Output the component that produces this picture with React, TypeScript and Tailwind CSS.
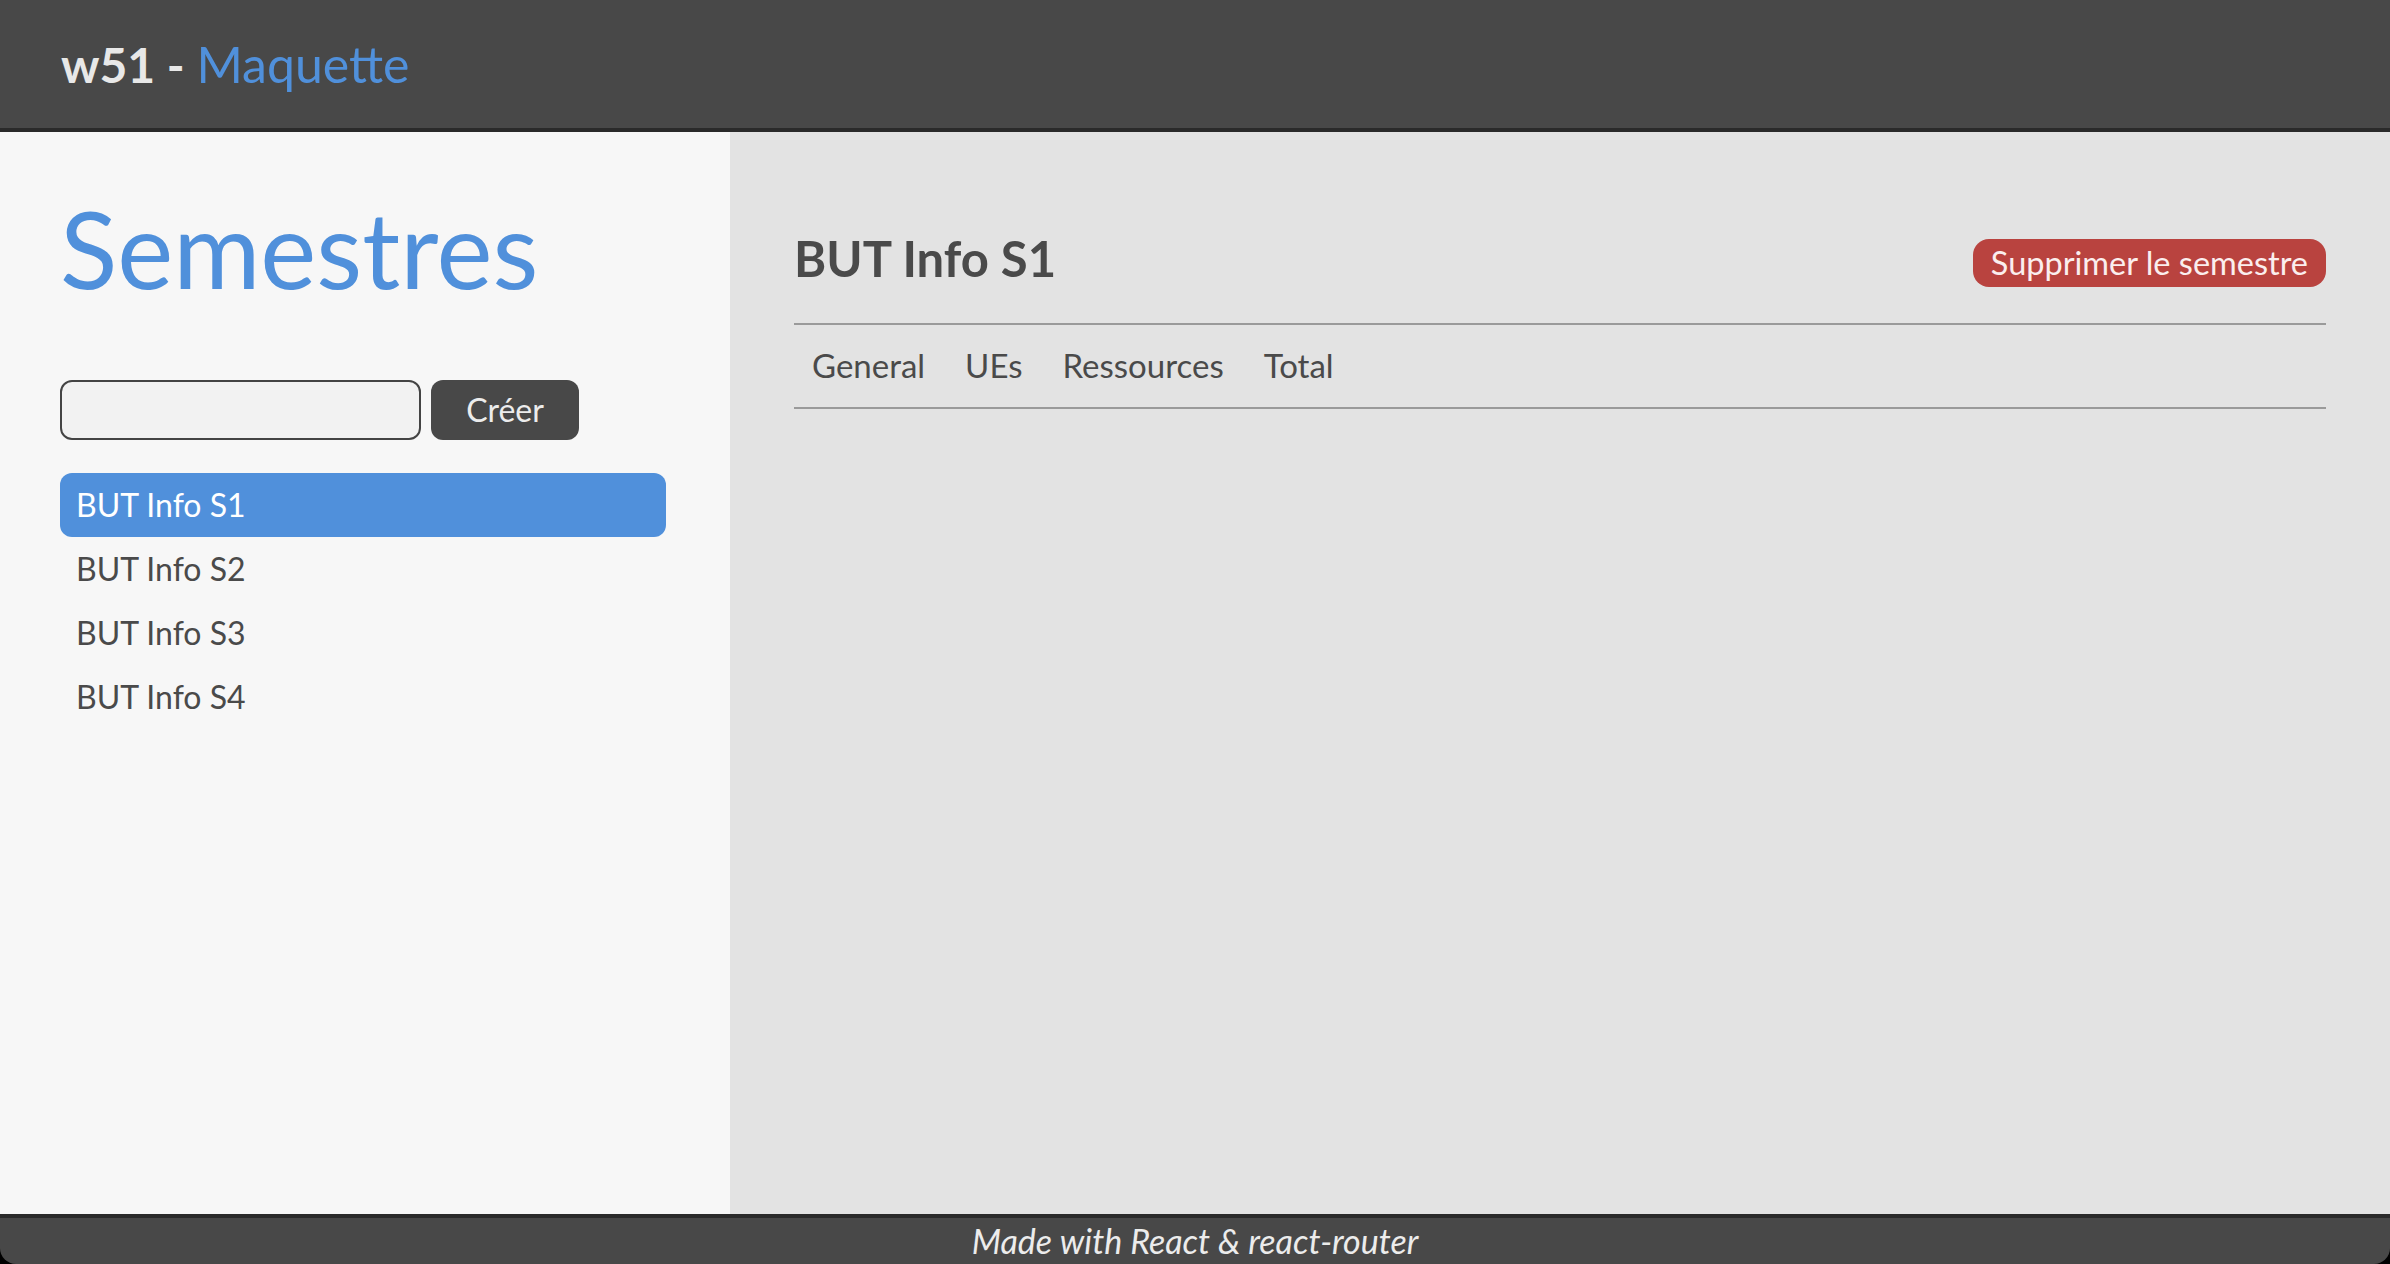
import React from "react";

const semestres = ["BUT Info S1", "BUT Info S2", "BUT Info S3", "BUT Info S4"];
const tabs = ["General", "UEs", "Ressources", "Total"];

export default function App() {
  return (
    <div className="h-screen w-full flex flex-col bg-black font-['Lato','Noto_Sans',sans-serif] text-[#4a4a4a]">
      <header className="h-[132px] shrink-0 bg-[#484848] border-b-4 border-[#2a2a2a] flex items-center px-[61px]">
        <h1 className="text-[48px] leading-none font-bold text-[#e8e8e8]">
          w51 - <span className="text-[50px] text-[#5090db] font-normal">Maquette</span>
        </h1>
      </header>
      <div className="flex flex-1 min-h-0">
        <aside className="w-[730px] shrink-0 bg-[#f7f7f7] px-[60px] pt-[63px]">
          <h2 className="text-[106px] leading-none text-[#5090db] font-normal">Semestres</h2>
          <div className="flex gap-[10px] mt-[79px]">
            <input
              type="text"
              className="w-[361px] h-[60px] rounded-[12px] border-2 border-[#444] bg-[#f2f2f2] px-3 text-[30px] outline-none"
            />
            <button className="w-[148px] h-[60px] rounded-[12px] bg-[#484848] text-[#ececec] text-[32px]">
              Créer
            </button>
          </div>
          <ul className="mt-[33px] flex flex-col">
            {semestres.map((s, i) => (
              <li
                key={s}
                className={
                  i === 0
                    ? "h-[64px] w-[606px] rounded-[12px] bg-[#5090db] text-white text-[32px] flex items-center px-[16px]"
                    : "h-[64px] w-[606px] rounded-[12px] text-[#4a4a4a] text-[32px] flex items-center px-[16px]"
                }
              >
                {s}
              </li>
            ))}
          </ul>
        </aside>
        <main className="flex-1 bg-[#e3e3e3] px-[64px] pt-[96px]">
          <div className="flex items-center justify-between h-[60px]">
            <h3 className="text-[49px] font-bold text-[#4a4a4a] leading-none">BUT Info S1</h3>
            <button className="mt-[10px] h-[48px] px-[18px] rounded-[16px] bg-[#b9433f] text-[#fbeeee] text-[32.5px] leading-none">
              Supprimer le semestre
            </button>
          </div>
          <nav className="mt-[35px] border-t-2 border-b-2 border-[#9a9a9a] h-[86px] flex items-center pl-[18px] gap-[40px] text-[33px] text-[#4a4a4a]">
            {tabs.map((t) => (
              <span key={t}>{t}</span>
            ))}
          </nav>
        </main>
      </div>
      <footer className="h-[50px] shrink-0 bg-[#484848] border-t-4 border-[#2a2a2a] rounded-b-[16px] flex items-center justify-center">
        <span className="italic text-[34px] text-[#ececec] leading-none">Made with React &amp; react-router</span>
      </footer>
    </div>
  );
}
